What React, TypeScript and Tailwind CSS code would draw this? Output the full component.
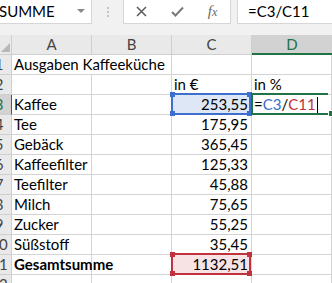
import React from 'react';

const font = { fontFamily: 'Lato, "Liberation Sans", sans-serif' };

type Row = { n: number; a?: string; c?: string; d?: string; bold?: boolean };

const rows: Row[] = [
  { n: 1, a: 'Ausgaben Kaffeeküche' },
  { n: 2, c: 'in €', d: 'in %' },
  { n: 3, a: 'Kaffee', c: '253,55' },
  { n: 4, a: 'Tee', c: '175,95' },
  { n: 5, a: 'Gebäck', c: '365,45' },
  { n: 6, a: 'Kaffeefilter', c: '125,33' },
  { n: 7, a: 'Teefilter', c: '45,88' },
  { n: 8, a: 'Milch', c: '75,65' },
  { n: 9, a: 'Zucker', c: '55,25' },
  { n: 10, a: 'Süßstoff', c: '35,45' },
  { n: 11, a: 'Gesamtsumme', c: '1132,51', bold: true },
  { n: 12 },
];

function RefBox({ top, color }: { top: number; color: string }) {
  const handle = 'absolute w-[5px] h-[5px]';
  return (
    <div
      className="absolute left-[171px] w-[80px] h-[22px] border-2"
      style={{ top, borderColor: color }}
    >
      <span className={`${handle} -left-[3px] -top-[3px]`} style={{ background: color }} />
      <span className={`${handle} -right-[3px] -top-[3px]`} style={{ background: color }} />
      <span className={`${handle} -left-[3px] -bottom-[3px]`} style={{ background: color }} />
      <span className={`${handle} -right-[3px] -bottom-[3px]`} style={{ background: color }} />
    </div>
  );
}

export default function App() {
  return (
    <div className="relative w-[332px] h-[283px] overflow-hidden bg-white text-[15px] text-black" style={font}>
      {/* Bearbeitungsleiste */}
      <div className="flex h-[35px] bg-[#f1f1f1]">
        <div className="relative w-[92px] h-[24px] bg-white border-r border-b border-[#d6d6d6] flex items-center">
          <span className="-ml-[1px] leading-none">SUMME</span>
          <span className="absolute left-[77px] top-[9px] w-0 h-0 border-l-[4px] border-r-[4px] border-t-[4px] border-l-transparent border-r-transparent border-t-[#8a8a8a]" />
        </div>
        <div className="w-[31px] h-[24px] flex items-center justify-center">
          <div className="flex flex-col gap-[2px]">
            <span className="w-[2px] h-[2px] bg-[#c4c4c4]" />
            <span className="w-[2px] h-[2px] bg-[#c4c4c4]" />
            <span className="w-[2px] h-[2px] bg-[#c4c4c4]" />
          </div>
        </div>
        <div className="w-[108px] h-[24px] bg-white border-l border-r border-b border-[#d6d6d6] flex items-center">
          <div className="w-[37px] flex justify-center">
            <svg width="11" height="11" viewBox="0 0 11 11">
              <path d="M1 1 L10 10 M10 1 L1 10" stroke="#5a5a5a" strokeWidth="1.5" />
            </svg>
          </div>
          <div className="w-[36px] flex justify-center">
            <svg width="13" height="11" viewBox="0 0 13 11">
              <path d="M1 6 L4.5 9.5 L12 1.5" stroke="#7a7a7a" strokeWidth="2" fill="none" />
            </svg>
          </div>
          <div className="w-[36px] flex justify-center">
            <span className="italic text-[15px] text-[#6a6a6a]" style={{ fontFamily: '"Liberation Serif", serif' }}>
              f<span className="text-[12px]">x</span>
            </span>
          </div>
        </div>
        <div className="w-[6px]" />
        <div className="flex-1 h-[24px] bg-white border-l border-b border-[#d6d6d6] flex items-center pl-[10px]">
          <span className="leading-none">=C3/C11</span>
        </div>
      </div>

      {/* Spaltenköpfe */}
      <div className="flex h-[20px] bg-[#e9e9e9] text-[#444]">
        <div className="w-[12px] border-r border-b border-[#cfcfcf] flex items-end justify-end pr-[1px] pb-[2px]">
          <svg width="9" height="9" viewBox="0 0 9 9">
            <polygon points="9,0 9,9 0,9" fill="#b8b8b8" />
          </svg>
        </div>
        {['A', 'B', 'C'].map((l) => (
          <div key={l} className="w-[80px] border-r border-b border-[#cfcfcf] flex items-center justify-center">
            {l}
          </div>
        ))}
        <div className="w-[80px] bg-[#d2d2d2] border-b-2 border-[#217346] text-[#217346] flex items-center justify-center">
          D
        </div>
      </div>

      {/* Zeilen */}
      {rows.map((r) => (
        <div key={r.n} className="flex h-[20px]">
          <div
            className={`w-[12px] h-[20px] overflow-hidden border-b border-[#cfcfcf] ${
              r.n === 3 ? 'bg-[#d2d2d2] border-r border-r-[#217346] text-[#217346]' : 'bg-[#e9e9e9] border-r border-r-[#cfcfcf] text-[#444]'
            }`}
          >
            <div className="w-[24px] -ml-[13px] text-center leading-[19px]">{r.n}</div>
          </div>
          <div
            className={`w-[80px] h-[20px] border-b border-[#d4d4d4] pl-[2px] leading-[19px] whitespace-nowrap ${
              r.n === 1 ? '' : 'border-r'
            } ${r.bold ? 'font-bold' : ''}`}
          >
            {r.a}
          </div>
          <div className="w-[80px] h-[20px] border-r border-b border-[#d4d4d4]" />
          <div
            className={`w-[80px] h-[20px] border-r border-b border-[#d4d4d4] leading-[19px] whitespace-nowrap ${
              r.n === 2 ? 'pl-[2px]' : 'text-right pr-[3px]'
            } ${r.n === 3 ? 'bg-[#dde7f5]' : ''} ${r.n === 11 ? 'bg-[#f7e3e4]' : ''}`}
          >
            {r.c}
          </div>
          <div className="w-[80px] h-[20px] border-r border-b border-[#d4d4d4] pl-[2px] leading-[19px] whitespace-nowrap">
            {r.n === 3 ? (
              <span className="flex items-center">
                =<span className="text-[#3a6fd0]">C3</span>/<span className="text-[#c0323d]">C11</span>
                <span className="ml-[1px] w-[1px] h-[16px] bg-black" />
              </span>
            ) : (
              r.d
            )}
          </div>
        </div>
      ))}

      {/* Bezugsrahmen */}
      <RefBox top={93} color="#3d6fce" />
      <RefBox top={253} color="#c0323d" />
      <div className="absolute left-[251px] top-[93px] w-[77px] h-[22px] border-2 border-r-0 border-[#217346]" />
      <div className="absolute left-[328px] top-[110px] w-[7px] h-[7px] bg-[#217346] border border-white" />
    </div>
  );
}
